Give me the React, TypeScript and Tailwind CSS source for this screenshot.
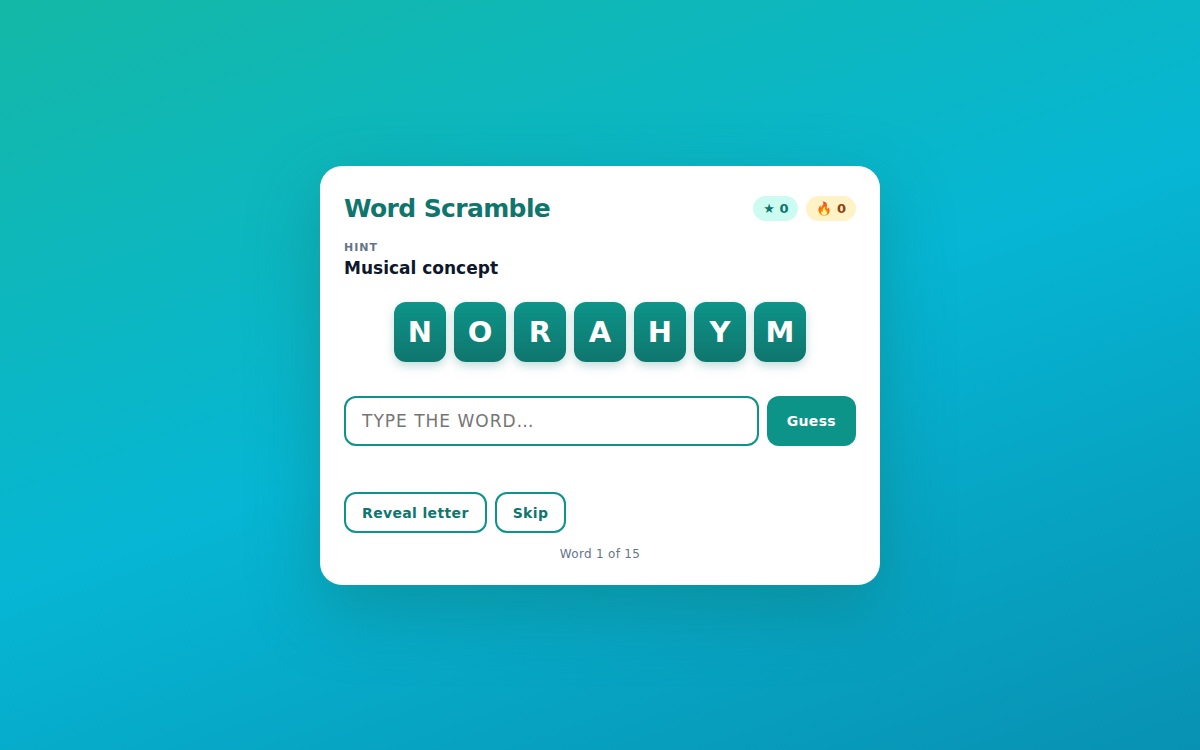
import React, { useState } from 'react';

const LETTERS = ['N', 'O', 'R', 'A', 'H', 'Y', 'M'];
const ANSWER = 'HARMONY';
const TOTAL_WORDS = 15;

const outlineButton =
  'rounded-xl border-2 border-[#0d9488] bg-white px-4 pt-[9px] pb-2 text-sm leading-5 font-bold tracking-wide text-[#0f766e] cursor-pointer';

const Tile = ({ letter }: { letter: string }) => (
  <div className="flex h-[60px] w-[52px] items-center justify-center rounded-xl bg-linear-to-b from-[#0d9488] to-[#0f766e] pt-[2px] text-[29px] leading-none font-bold text-white shadow-[0_4px_10px_rgba(15,118,110,0.25)]">
    {letter}
  </div>
);

const App = () => {
  const [guess, setGuess] = useState('');
  const [score, setScore] = useState(0);
  const [streak, setStreak] = useState(0);
  const [message, setMessage] = useState('');

  const handleSubmit = (e: React.FormEvent) => {
    e.preventDefault();
    if (guess.trim().toUpperCase() === ANSWER) {
      setScore(prev => prev + 1);
      setStreak(prev => prev + 1);
      setMessage('Correct!');
    } else {
      setStreak(0);
      setMessage('Not quite, try again');
    }
  };

  return (
    <div className="flex min-h-screen items-center justify-center bg-[linear-gradient(160deg,#14b8a6_0%,#06b6d4_50%,#0891b2_100%)] p-4 font-['DejaVu_Sans',sans-serif]">
      <main className="w-full max-w-[560px] rounded-[22px] bg-white p-6 shadow-[0_24px_70px_rgba(15,118,110,0.45)]">
        {/* Title and counters */}
        <header className="flex items-center justify-between gap-3">
          <h1 className="text-[25px] leading-[38px] font-bold tracking-tight text-[#0f766e]">Word Scramble</h1>
          <div className="flex gap-2 text-[13px] leading-[17px] font-bold">
            <span className="rounded-full bg-[#ccfbf1] px-[10px] py-1 text-[#0f766e]">★ {score}</span>
            <span className="rounded-full bg-[#fef3c7] px-[10px] py-1 text-[#92400e]">🔥 {streak}</span>
          </div>
        </header>

        {/* Hint */}
        <section className="mt-3">
          <p className="text-[11px] leading-4 font-bold tracking-[1px] text-[#64748b] uppercase">Hint</p>
          <p className="text-[17px] leading-6 font-bold text-[#0f172a]">Musical concept</p>
        </section>

        <div className="mt-[22px] flex flex-wrap justify-center gap-2">
          {LETTERS.map(letter => (
            <Tile key={letter} letter={letter} />
          ))}
        </div>

        <form onSubmit={handleSubmit} className="mt-[34px] flex gap-2">
          <input
            type="text"
            aria-label="Your guess"
            placeholder="Type the word…"
            value={guess}
            onChange={e => setGuess(e.target.value)}
            className="h-[50px] min-w-0 flex-1 rounded-xl border-2 border-[#0d9488] bg-white px-4 text-[17px] tracking-[1px] uppercase outline-none placeholder:text-[#757575]"
          />
          <button type="submit" className="cursor-pointer rounded-xl bg-[#0d9488] px-5 text-sm font-bold tracking-wide text-white">
            Guess
          </button>
        </form>

        <p aria-live="polite" className="mt-2 h-[22px] text-center text-sm font-bold text-[#0f766e]">
          {message}
        </p>

        <div className="mt-4 flex flex-wrap gap-2">
          <button type="button" className={outlineButton} onClick={() => setMessage(`Starts with ${ANSWER[0]}`)}>
            Reveal letter
          </button>
          <button type="button" className={outlineButton} onClick={() => setGuess('')}>
            Skip
          </button>
        </div>

        <p className="mt-[14px] text-center text-xs leading-[14px] tracking-wide text-[#64748b]">Word 1 of {TOTAL_WORDS}</p>
      </main>
    </div>
  );
};

export default App;
